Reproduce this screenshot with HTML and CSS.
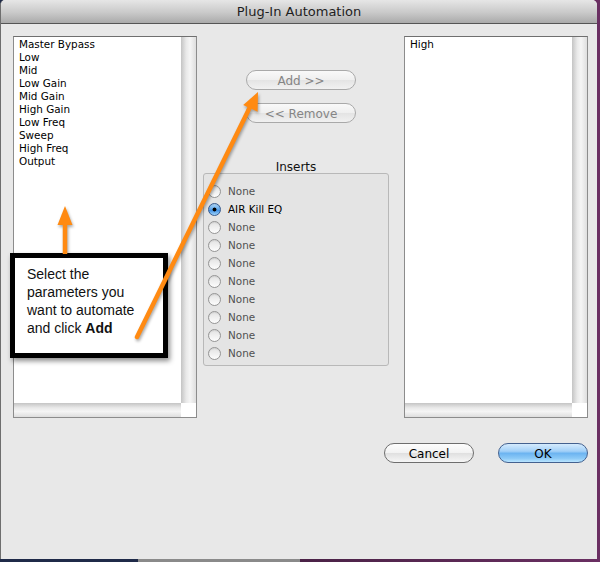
FILE: index.html
```
<!DOCTYPE html>
<html>
<head>
<meta charset="utf-8">
<title>Plug-In Automation</title>
<link rel="stylesheet" href="styles.css">
</head>
<body>
<div class="window">
  <div class="titlebar">Plug-In Automation</div>
  <div class="content">
    <div class="listbox">
      <div class="items">
        <div class="item">Master Bypass</div>
        <div class="item">Low</div>
        <div class="item">Mid</div>
        <div class="item">Low Gain</div>
        <div class="item">Mid Gain</div>
        <div class="item">High Gain</div>
        <div class="item">Low Freq</div>
        <div class="item">Sweep</div>
        <div class="item">High Freq</div>
        <div class="item">Output</div>
      </div>
      <div class="vbar"></div>
      <div class="hbar"></div>
      <div class="corner"></div>
    </div>
    <div class="middle">
      <div class="btn disabled add">Add &gt;&gt;</div>
      <div class="btn disabled remove">&lt;&lt; Remove</div>
      <div class="inserts-label">Inserts</div>
      <div class="inserts">
        <div class="radio-row"><span class="radio"></span><span class="rlabel">None</span></div>
        <div class="radio-row sel"><span class="radio on"></span><span class="rlabel">AIR Kill EQ</span></div>
        <div class="radio-row"><span class="radio"></span><span class="rlabel">None</span></div>
        <div class="radio-row"><span class="radio"></span><span class="rlabel">None</span></div>
        <div class="radio-row"><span class="radio"></span><span class="rlabel">None</span></div>
        <div class="radio-row"><span class="radio"></span><span class="rlabel">None</span></div>
        <div class="radio-row"><span class="radio"></span><span class="rlabel">None</span></div>
        <div class="radio-row"><span class="radio"></span><span class="rlabel">None</span></div>
        <div class="radio-row"><span class="radio"></span><span class="rlabel">None</span></div>
        <div class="radio-row"><span class="radio"></span><span class="rlabel">None</span></div>
      </div>
    </div>
    <div class="listbox right">
      <div class="items">
        <div class="item">High</div>
      </div>
      <div class="vbar"></div>
      <div class="hbar"></div>
      <div class="corner"></div>
    </div>
  </div>
  <div class="footer">
    <div class="btn cancel">Cancel</div>
    <div class="btn ok">OK</div>
  </div>

  <div class="callout">Select the<br>parameters you<br>want to automate<br>and click <b>Add</b></div>

  <svg class="arrows" width="600" height="562" viewBox="0 0 600 562">
    <g class="arrow">
      <line x1="65" y1="254" x2="65" y2="222" stroke="#ff8a12" stroke-width="4.5"/>
      <polygon points="65,206 57.5,225 72.5,225" fill="#ff8a12"/>
    </g>
    <g class="arrow">
      <line x1="137" y1="337" x2="250" y2="107" stroke="#ff8a12" stroke-width="4.5" stroke-linecap="round"/>
      <polygon points="258,92 257.6,111.7 243.2,104.9" fill="#ff8a12"/>
    </g>
  </svg>
</div>
</body>
</html>
```

FILE: styles.css
```
html, body {
  margin: 0;
  padding: 0;
}
body {
  width: 600px;
  height: 562px;
  background: linear-gradient(90deg, #1f2a48 0, #1f2a48 23%, #8a8a8a 23%, #8a8a8a 50%, #4a2246 50%, #6a2f62 100%);
  font-family: "DejaVu Sans", sans-serif;
  overflow: hidden;
}
.window {
  position: relative;
  box-sizing: border-box;
  width: 597px;
  height: 559px;
  background: #e8e8e8;
  border-left: 1px solid #6e6e6e;
  border-radius: 5px 5px 0 0;
  display: flex;
  flex-direction: column;
  overflow: hidden;
}
.titlebar {
  box-sizing: border-box;
  height: 24px;
  line-height: 23px;
  text-align: center;
  font-size: 13px;
  color: #1e1e1e;
  background: linear-gradient(#e6e6e6, #c9c9c9 55%, #aaaaaa);
  border-bottom: 1px solid #555;
}
.content {
  display: flex;
  padding: 12px 9px 0 12px;
}
.listbox {
  box-sizing: border-box;
  width: 184px;
  height: 382px;
  border: 1px solid #8c8c8c;
  border-top-color: #6f6f6f;
  background: #fff;
  display: grid;
  grid-template-columns: 1fr 15px;
  grid-template-rows: 1fr 14px;
}
.listbox.right {
  margin-left: 15px;
}
.items {
  padding: 1px 5px 0;
  font-size: 10.4px;
  line-height: 13px;
  color: #000;
}
.vbar {
  background: linear-gradient(90deg, #c4c4c4, #e9e9e9 35%, #f5f5f5 60%, #dedede);
}
.hbar {
  background: linear-gradient(#c4c4c4, #e9e9e9 35%, #f5f5f5 60%, #dedede);
}
.corner {
  background: #fff;
}
.middle {
  box-sizing: border-box;
  width: 186px;
  margin-left: 6px;
  display: flex;
  flex-direction: column;
}
.btn {
  box-sizing: border-box;
  height: 20px;
  width: 110px;
  border-radius: 10px;
  text-align: center;
  font-size: 12px;
  line-height: 18px;
  padding-top: 1px;
  border: 1px solid #6e6e6e;
  background: linear-gradient(#fdfdfd, #f2f2f2 50%, #e0e0e0 52%, #f6f6f6);
  color: #000;
  overflow: hidden;
}
.btn.disabled {
  border-color: #a9a9a9;
  color: #858585;
  background: linear-gradient(#f9f9f9, #efefef 50%, #e4e4e4 52%, #f1f1f1);
}
.add {
  margin: 34px 0 0 43px;
}
.remove {
  margin: 13px 0 0 43px;
}
.inserts-label {
  margin-top: 38px;
  height: 12px;
  line-height: 12px;
  font-size: 12px;
  text-align: center;
  color: #111;
}
.inserts {
  box-sizing: border-box;
  height: 193px;
  border: 1px solid #b8b8b8;
  border-radius: 3px;
  background: #e4e4e4;
  padding: 8px 0 0 4px;
}
.radio-row {
  display: flex;
  align-items: center;
  height: 18px;
  gap: 7px;
  font-size: 10.4px;
  color: #505050;
}
.radio-row.sel {
  color: #000;
}
.radio {
  box-sizing: border-box;
  width: 13px;
  height: 13px;
  border-radius: 50%;
  border: 1px solid #959595;
  background: linear-gradient(#e2e2e2, #fdfdfd);
  box-shadow: inset 0 1px 1px rgba(0,0,0,0.08);
}
.radio.on {
  border-color: #35598e;
  background:
    radial-gradient(circle at 50% 50%, #000 0, #000 1.6px, transparent 2.3px),
    linear-gradient(#b5dcfb, #5aa3ea 50%, #3d8ee3 55%, #9fd4fb);
}
.footer {
  display: flex;
  justify-content: flex-end;
  gap: 24px;
  padding: 25px 9px 0 0;
}
.cancel, .ok {
  width: 90px;
}
.ok {
  border-color: #44618f;
  background: linear-gradient(#d5ebfd, #a2d0f8 40%, #6cb4f1 52%, #8ccaf7 80%, #b9e5ff);
}
.callout {
  position: absolute;
  left: 9px;
  top: 253px;
  box-sizing: border-box;
  width: 158px;
  height: 105px;
  border: 5px solid #000;
  background: #fff;
  padding: 7px 0 0 12px;
  font-family: "Liberation Sans", Arial, sans-serif;
  font-size: 14px;
  line-height: 18px;
  color: #111;
  box-shadow: 2px 3px 5px rgba(0,0,0,0.45);
}
.arrows {
  position: absolute;
  left: -1px;
  top: 0;
  pointer-events: none;
}
.arrow {
  filter: drop-shadow(1px 2px 1.5px rgba(0,0,0,0.35));
}
```
